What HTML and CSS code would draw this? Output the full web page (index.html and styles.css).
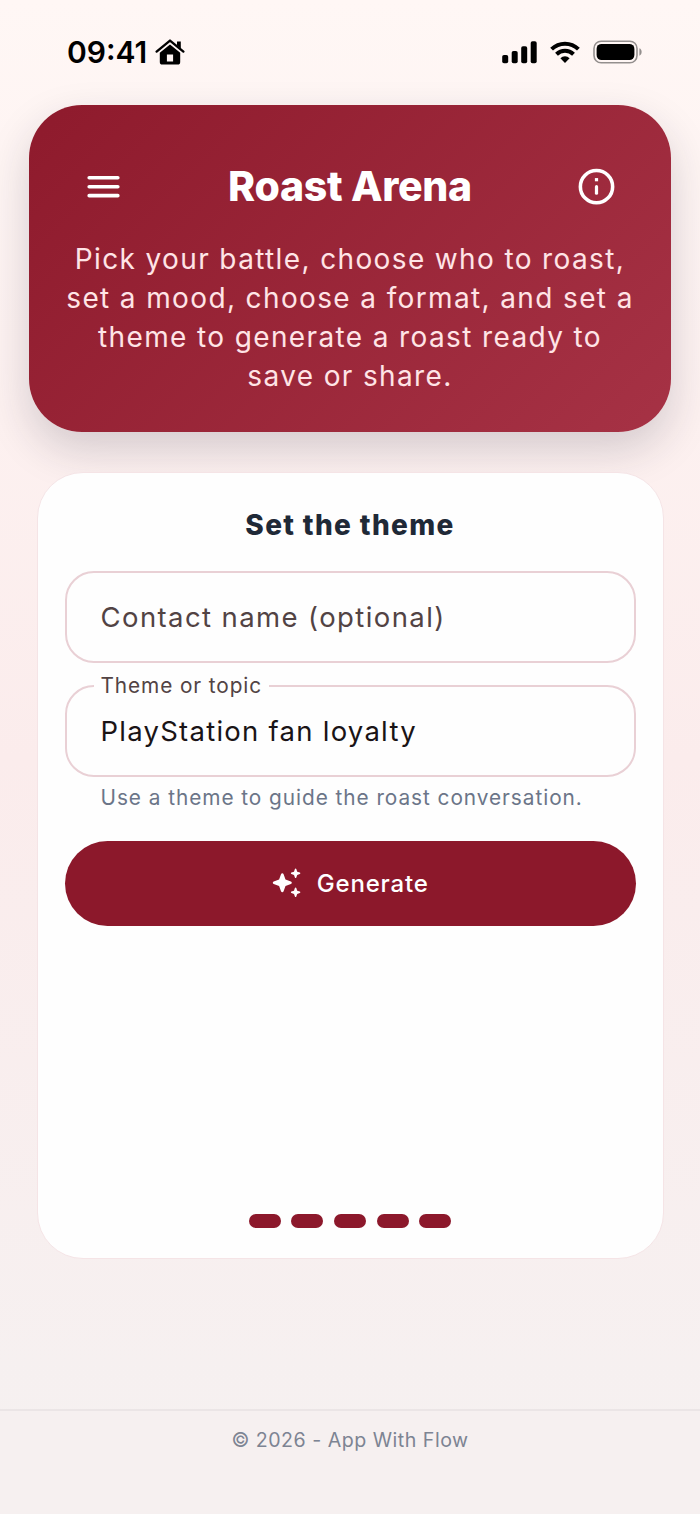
FILE: index.html
```html
<!DOCTYPE html>
<html lang="en">
<head>
<meta charset="utf-8">
<title>Roast Arena</title>
<link rel="stylesheet" href="styles.css">
</head>
<body>
<div class="screen">
  <div class="status">
    <div class="status-left">
      <span class="clock">09:41</span>
      <svg class="home" width="30" height="27" viewBox="0 0 30 27">
        <path d="M1.6 12.6 15 1.6l13.4 11" fill="none" stroke="#000" stroke-width="2.4" stroke-linecap="round" stroke-linejoin="round"/>
        <path d="M22 2.6h3.8v6.9L22 6.4z"/>
        <path fill-rule="evenodd" d="M15 5.4 25.2 13.8V23a2.6 2.6 0 0 1-2.6 2.6H7.4A2.6 2.6 0 0 1 4.8 23v-9.2zM11.9 15.4v7.2h6.2v-7.2z"/>
      </svg>
    </div>
    <div class="status-right">
      <svg width="36" height="23" viewBox="0 0 36 23">
        <rect x="0.2" y="14" width="6" height="8.3" rx="1.8"/><rect x="9.7" y="10" width="6" height="12.3" rx="1.8"/><rect x="19.2" y="5.2" width="6" height="17.1" rx="1.8"/><rect x="28.7" y="0.3" width="6" height="22" rx="1.8"/>
      </svg>
      <svg class="wifi" width="30" height="23" viewBox="0 0 30 23">
        <g fill="none" stroke="#000" stroke-width="4"><path d="M1.6 8.1a19.2 19.2 0 0 1 26.8 0"/><path d="M6.5 13.2a12.2 12.2 0 0 1 17 0"/></g>
        <path d="M10.4 17.2a6.6 6.6 0 0 1 9.2 0L15 22z"/>
      </svg>
      <svg class="battery" width="50" height="24" viewBox="0 0 50 24">
        <rect x="1" y="1.2" width="43" height="21.6" rx="7.2" fill="none" stroke="#000" stroke-opacity=".42" stroke-width="1.6"/>
        <rect x="3.6" y="3.9" width="37.8" height="16.2" rx="5"/>
        <path d="M46.4 8.3c3 1.2 3 6.2 0 7.4z" fill-opacity=".42"/>
      </svg>
    </div>
  </div>

  <header class="hero">
    <div class="hero-bar">
      <svg width="43" height="43" viewBox="0 0 24 24" fill="none" stroke="#fff" stroke-width="2" stroke-linecap="round"><path d="M4 7.1h16M4 12.1h16M4 17.1h16"/></svg>
      <h1 class="title">Roast Arena</h1>
      <svg width="43" height="43" viewBox="0 0 24 24" fill="none" stroke="#fff" stroke-width="2"><circle cx="12" cy="12.1" r="9"/><path d="M12 12.1v3.6" stroke-width="1.8" stroke-linecap="round"/><path d="M11.1 8.2h1.8" stroke-width="1.8"/></svg>
    </div>
    <p class="intro">Pick your battle, choose who to roast,<br>set a mood, choose a format, and set a<br>theme to generate a roast ready to<br>save or share.</p>
  </header>

  <main class="panel">
    <h2 class="panel-title">Set the theme</h2>
    <div class="field"><span class="placeholder">Contact name (optional)</span></div>
    <div class="field field-filled">
      <span class="label">Theme or topic</span>
      <span class="value">PlayStation fan loyalty</span>
    </div>
    <p class="helper">Use a theme to guide the roast conversation.</p>
    <button class="generate">
      <svg width="28" height="28" viewBox="0 0 28 28" fill="#fff"><path d="M9.3 4.3Q10.2 4.3 10.6 5.2L12.5 10.6 17.9 12.5Q18.8 12.9 18.8 13.8T17.9 15.1L12.5 17 10.6 22.3Q10.2 23.2 9.3 23.2T8 22.3L6.1 17 .7 15.1Q-.2 14.7-.2 13.8T.7 12.5L6.1 10.6 8 5.2Q8.4 4.3 9.3 4.3z"/><path id="spark" d="M22.6-.4Q23.1-.4 23.3.1L24.2 2.7 26.8 3.6Q27.3 3.8 27.3 4.3T26.8 5L24.2 5.9 23.3 8.5Q23.1 9 22.6 9T21.9 8.5L21 5.9 18.4 5Q17.9 4.8 17.9 4.3T18.4 3.6L21 2.7 21.9.1Q22.1-.4 22.6-.4z"/><use href="#spark" y="19"/></svg>
      <span>Generate</span>
    </button>
    <div class="steps"><i class="step"></i><i class="step"></i><i class="step"></i><i class="step"></i><i class="step"></i></div>
  </main>

  <footer class="footer">© 2026 - App With Flow</footer>
</div>
</body>
</html>
```
FILE: styles.css
```css
* { box-sizing: border-box; }
body { margin: 0; font-family: Inter, "Liberation Sans", sans-serif; }
h1, h2, p { margin: 0; }
svg { display: block; flex: none; overflow: visible; }
.screen {
  width: 700px; height: 1514px;
  display: flex; flex-direction: column;
  background: linear-gradient(180deg, #fff7f5 0%, #fbecec 50%, #f5f1f1 100%);
}
.status { height: 105px; flex: none; display: flex; justify-content: space-between; padding: 37px 57px 0 67px; }
.status-left { display: flex; align-items: center; height: 30px; gap: 7.5px; }
.home { margin-top: 1px; }
.clock { font-size: 30px; font-weight: 600; line-height: 30px; letter-spacing: 0; }
.status-right { display: flex; align-items: center; height: 30px; }
.wifi { margin-left: 12px; }
.battery { margin-left: 13px; }

.hero {
  height: 327px; flex: none; margin: 0 29px; padding: 60px 30px 0;
  border-radius: 53px;
  background: linear-gradient(135deg, #8e1a2c, #a63245);
  box-shadow: 0 18px 43px rgba(31, 31, 55, .18);
  color: #fff;
}
.hero-bar { display: flex; justify-content: space-between; align-items: center; height: 43px; padding: 0 23px; }
.title { font-size: 41px; font-weight: 800; line-height: 43px; letter-spacing: -0.3px; }
.intro { margin-top: 32px; font-size: 28px; line-height: 39px; letter-spacing: 1.37px; text-align: center; color: #ffe4e6; white-space: nowrap; }

.panel {
  height: 787px; flex: none; margin: 40px 36.5px 0; padding: 34px 27px 30px;
  display: flex; flex-direction: column;
  border: 1px solid #f5e4e6; border-radius: 46px;
  background: #fefefe;
}
.panel-title { font-size: 28px; font-weight: 800; line-height: 36px; letter-spacing: 1.35px; text-align: center; color: #1f2937; }
.field { height: 92px; flex: none; margin-top: 28px; padding: 0 34px; border: 2px solid #e9d0d5; border-radius: 29px; display: flex; align-items: center; position: relative; font-size: 27.5px; white-space: nowrap; }
.placeholder { color: #524344; letter-spacing: 1.4px; }
.field-filled { margin-top: 22px; }
.value { color: #1a1416; letter-spacing: 1.25px; }
.label { position: absolute; left: 27px; top: -14px; padding: 0 7px; background: #fefefe; font-size: 20.8px; line-height: 26px; letter-spacing: .9px; color: #524344; }
.helper { margin: 7px 0 0 36px; font-size: 20.8px; line-height: 28px; letter-spacing: .95px; color: #6b7588; white-space: nowrap; }
.generate { height: 85px; flex: none; margin-top: 28.5px; padding: 0 4px 0 6px; display: flex; align-items: center; justify-content: center; gap: 15.5px; border: 0; border-radius: 43px; background: #8c182b; color: #fff; font-family: inherit; font-size: 24px; font-weight: 500; letter-spacing: .8px; }
.steps { margin-top: auto; display: flex; justify-content: center; gap: 10.6px; }
.step { width: 32px; height: 14.5px; border-radius: 8px; background: #8c182b; }
.footer { margin-top: 150px; flex: 1; padding-top: 16px; border-top: 2px solid #ebe5e6; background: #f6f0f0; text-align: center; font-size: 19.6px; font-weight: 430; line-height: 26px; letter-spacing: .5px; color: #7d8493; }
```
